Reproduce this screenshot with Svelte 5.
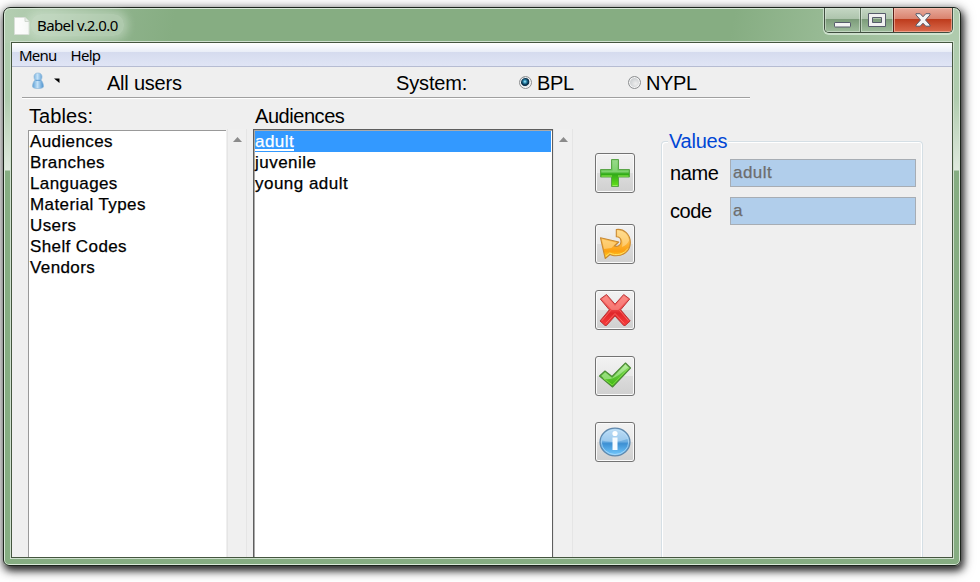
<script>
  const tables = ['Audiences', 'Branches', 'Languages', 'Material Types', 'Users', 'Shelf Codes', 'Vendors'];
  const audiences = ['adult', 'juvenile', 'young adult'];
  const fields = [{ label: 'name', value: 'adult' }, { label: 'code', value: 'a' }];
  let selected = $state('adult');
</script>

<div class="desktop">
<div class="window">
  <header class="titlebar">
    <svg class="doc" width="16" height="18" viewBox="0 0 16 18"><path d="M.5.5H11L15 4.500V17.500H.5Z" fill="#fcfcfc" stroke="#d9dfd8" /><path d="M11 .5V4.500h4" fill="#e9ece9" stroke="#cdd4cc" /></svg>
    <span class="title">Babel v.2.0.0</span>
    <div class="controls">
      <span class="ctl min"><svg width="17" height="6" viewBox="0 0 17 6"><rect x=".5" y=".5" width="16" height="4.500" rx=".6" fill="#f4f4f4" stroke="#565b6b" /></svg></span>
      <span class="ctl max"><svg width="18" height="15" viewBox="0 0 18 15"><path fill-rule="evenodd" d="M.5.5h17v13H.5ZM4.500 4.500v5h9v-5Z" fill="#f1f1f1" stroke="#565b6b" /></svg></span>
      <span class="ctl close"><svg width="16" height="14" viewBox="0 0 16 14"><path d="M1 .7h4.200L8 3.800 10.800.7H15v1.200L10.500 7l4.500 5v1.200h-4.200L8 10.200l-2.800 3H1V12l4.500-5L1 1.900Z" fill="#f4f4f4" stroke="#565b6b" /></svg></span>
    </div>
  </header>
  <main class="client">
    <nav class="menu"><span>Menu</span><span class="help">Help</span></nav>
    <section class="toolbar">
      <svg class="person" width="14" height="18" viewBox="0 0 14 18">
        <defs><linearGradient id="pg" x1="0" x2="1"><stop offset="0" stop-color="#5b9fd5" /><stop offset=".45" stop-color="#c4e2f8" /><stop offset="1" stop-color="#4b91ce" /></linearGradient></defs>
        <path d="M7 1C4.300 1 3 2.700 3 4.800c0 1.500.4 2.300 1.100 3.200C2.400 9.500 1.500 12 1.500 14.500 1.500 16 4 16.500 7 16.500s5.500-.5 5.500-2c0-2.500-.9-5-2.600-6.500C10.600 7.100 11 6.300 11 4.800 11 2.700 9.700 1 7 1Z" fill="url(#pg)" stroke="#8fb7d8" stroke-width=".7" />
        <path d="M4.500 8.300h5" stroke="#5b99d0" />
      </svg>
      <svg class="drop" width="6" height="6" viewBox="0 0 6 6"><path d="M0 .5h5.500V5Z" fill="#000" /></svg>
      <span class="users">All users</span>
      <span class="system">System:</span>
      <label class="bpl"><i class="radio on"></i>BPL</label>
      <label class="nypl"><i class="radio"></i>NYPL</label>
    </section>
    <div class="body">
      <section class="tables">
        <h2>Tables:</h2>
        <div class="pane">
          <div class="list">
            {#each tables as t}<div class="item">{t}</div>{/each}
          </div>
          <div class="scroll"><svg width="9" height="5" viewBox="0 0 9 5"><path d="M4.500 0 9 5H0Z" fill="#8b8b8b" /></svg></div>
        </div>
      </section>
      <section class="records">
        <h2>Audiences</h2>
        <div class="pane">
          <div class="list focus">
            {#each audiences as a}
              <div class="item" class:sel={a === selected} role="option" aria-selected={a === selected} tabindex="-1" onclick={() => (selected = a)} onkeydown={() => {}}><span>{a}</span></div>
            {/each}
          </div>
          <div class="scroll"><svg width="9" height="5" viewBox="0 0 9 5"><path d="M4.500 0 9 5H0Z" fill="#8b8b8b" /></svg></div>
        </div>
      </section>
      <section class="actions">
        <button class="add" aria-label="Add">
          <svg width="36" height="36" viewBox="0 0 36 36">
            <defs><linearGradient id="gp" x1="0" y1="0" x2="0" y2="1"><stop offset="0" stop-color="#86cf78" /><stop offset=".45" stop-color="#5cc24a" /><stop offset=".55" stop-color="#32ab18" /><stop offset="1" stop-color="#65e21b" /></linearGradient></defs>
            <path d="M14.500 4.500h7v10h11v7.500h-11v9.500h-7V22h-11v-7.500h11Z" fill="url(#gp)" stroke="#5aa548" stroke-linejoin="round" />
            <path d="M15.500 15.500V5.500h5v10h11v2H4.500v-2Z" fill="#b9edaa" opacity=".38" />
            <path d="M4.500 21h10.500M21 21h10.500M15.500 30.500h5" stroke="#92ed55" />
          </svg>
        </button>
        <button aria-label="Undo">
          <svg width="36" height="36" viewBox="0 0 36 36">
            <defs><linearGradient id="go" x1="0" y1="0" x2="0" y2="1"><stop offset="0" stop-color="#ffd57a" /><stop offset=".45" stop-color="#fdb63c" /><stop offset=".75" stop-color="#fca010" /><stop offset="1" stop-color="#ffd52a" /></linearGradient></defs>
            <path d="M19.300 3.500C27 2.500 33.500 8.500 33.300 17 33 25.500 26 30.500 17 29.700q-2-.2-4-1.200L8.200 32.500 3.500 11.800 21.800 16l-4.500 4c3 1 6.700-.5 6.700-4.200 0-3.300-2-5-4.700-5Z" fill="url(#go)" stroke="#c88a35" stroke-width="1.100" stroke-linejoin="round" />
            <path d="M20.300 4.600c6-.3 11 4 11.800 10-1.500 3.500-4 5.500-7.300 6.500 2-6.500-.5-10.500-4.500-11.200ZM4.900 13.200l14.500 3.500-5 5.300-7.400 1Z" fill="#ffe6aa" opacity=".5" />
            <path d="m8.900 30.300 3.900-3.300c6 3.200 14.200 1.500 18-4.500" fill="none" stroke="#ffe064" />
          </svg>
        </button>
        <button aria-label="Delete">
          <svg width="36" height="36" viewBox="0 0 36 36">
            <defs><linearGradient id="gr" x1="0" y1="0" x2="0" y2="1"><stop offset="0" stop-color="#f97470" /><stop offset=".45" stop-color="#f04c4c" /><stop offset=".6" stop-color="#df262a" /><stop offset="1" stop-color="#f83c3b" /></linearGradient></defs>
            <path d="M3.300 7 9.500 2.500 18 12.200l8.700-9.700 6 4.500-9 10.800 9.500 11.200-5 4.500h-1.500L18 24l-8.500 9.500H8L3 29l9.300-11.200Z" fill="url(#gr)" stroke="#b8383a" stroke-linejoin="round" />
            <path d="m5 7 4.300-3.200L18 14l8.800-10.200L31 7l-9.700 11h-6.600Z" fill="#ffaca5" opacity=".45" />
            <path d="m4.800 28.800 9-10.500M31.500 28.800l-9-10.500M8.700 31.500l9.300-10 9.300 10" fill="none" stroke="#ff7069" stroke-width=".8" />
          </svg>
        </button>
        <button aria-label="Confirm">
          <svg width="36" height="36" viewBox="0 0 36 36">
            <defs><linearGradient id="gc" x1="0" y1="0" x2="0" y2="1"><stop offset="0" stop-color="#a5e686" /><stop offset=".5" stop-color="#5fc53a" /><stop offset="1" stop-color="#3fb80c" /></linearGradient></defs>
            <path d="m2.500 18 5.500-5 7 5.500L28.500 5l5 5L15.500 29Z" fill="url(#gc)" stroke="#4c8a38" stroke-width="1.100" stroke-linejoin="round" />
            <path d="m4.500 17.800 3.700-3.200 7 5.500L28.300 6.800l2.900 2.600-9 7.400c-6 4-10 5-14.900 4.200Z" fill="#e1ffd3" opacity=".42" />
            <path d="m6.500 20.500 8.900 6.500 16-16.500" fill="none" stroke="#83e545" stroke-width=".9" />
          </svg>
        </button>
        <button aria-label="Information">
          <svg width="36" height="36" viewBox="0 0 36 36">
            <defs>
              <linearGradient id="gi" x1="0" y1="0" x2="0" y2="1"><stop offset="0" stop-color="#a8d1f0" /><stop offset=".48" stop-color="#70b0e2" /><stop offset=".56" stop-color="#3d90d3" /><stop offset="1" stop-color="#75cbff" /></linearGradient>
            </defs>
            <ellipse cx="18" cy="18" rx="15" ry="13.800" fill="url(#gi)" stroke="#6088ac" stroke-width="1.200" />
            <ellipse cx="18" cy="18" rx="13.700" ry="12.500" fill="none" stroke="#b4dcf8" stroke-width=".8" />
            <path d="M5 16.500C7 7.500 13 5.300 19 5.500c6.500.2 11 4.300 12 9.500-6 1-11 5-26 1.500Z" fill="#e2f3ff" opacity=".38" />
            <circle cx="18" cy="9.500" r="2.600" fill="#fff" /><path d="M15.500 13.500h5V26h-5Z" fill="#f6fbff" />
          </svg>
        </button>
      </section>
      <fieldset>
        <legend>Values</legend>
        {#each fields as f}
          <div class="field"><span class="lab">{f.label}</span><span class="input">{f.value}</span></div>
        {/each}
      </fieldset>
    </div>
  </main>
</div>
</div>

<style>
  :global(body) { background: #fff; overflow: hidden; }
  * { box-sizing: border-box; }
  .desktop { width: 980px; height: 582px; padding: 7px 0 0 3px; overflow: hidden; background: #fff; }
  .window {
    width: 958px; height: 559px; padding: 0 8px 8px;
    display: flow-root; border: 1px solid #1c241c; border-radius: 7px 7px 6px 6px;
    background:
      linear-gradient(100deg, #b4ceb2, #a9c6a7 50px, #8fb38c 110px, #86ad82 170px, #86ad82 720px, #9dbe9a 840px, #afcbad 930px) 0 0 / 100% 35px no-repeat,
      linear-gradient(#afccae, #afccae 90px, #bdd4bb 110px, #dfe9de 162px, #86ad82 163px);
    box-shadow: inset 0 0 0 1px #d9e8d8, 2px 4px 7px rgba(0, 0, 0, .65), 1px 3px 12px 1px rgba(0, 0, 0, .6);
    font-family: "Liberation Sans", Arial, sans-serif; color: #000;
  }
  .titlebar { height: 35px; display: flex; align-items: flex-start; margin-left: -1px; }
  .doc { margin: 9px 0 0 3px; }
  .title {
    margin: 6px 0 0 1px; padding: 0 6px; height: 22px; border-radius: 10px;
    font: 15px/23px "Noto Sans", sans-serif; letter-spacing: -.6px;
    background: rgba(225, 237, 224, .4); box-shadow: 0 0 9px 4px rgba(225, 237, 224, .4);
  }
  .controls {
    display: flex; width: 129px; height: 25px; margin: 0 -1px 0 auto; border: 1px solid #3f4d3f; border-top: 0;
    border-radius: 0 0 5px 5px; box-shadow: 0 1px 0 1px rgba(220, 235, 220, .75); overflow: hidden;
  }
  .ctl { display: flex; justify-content: center; box-shadow: inset 0 0 0 1px rgba(230, 240, 230, .5); background: linear-gradient(#c5d7c4, #adc4ac 11px, #7b9b79 11px, #9fbd9d); }
  .min { width: 35px; padding-top: 14px; }
  .max { width: 33px; padding-top: 5px; border-left: 1px solid #536853; }
  .close { flex: 1; padding-top: 5px; border-left: 1px solid #5b1f18; background: linear-gradient(#e8ab9c, #d9826e 11px, #bd3a1b 11px, #d96a4d); box-shadow: inset 0 0 0 1px rgba(255, 205, 190, .55); }
  .client {
    height: 514px; width: 940px; display: flex; flex-direction: column; background: #efefef;
    outline: 1px solid #45563f; box-shadow: 0 0 0 2px #cfe0ce;
  }
  .menu {
    height: 24px; flex: none; padding-left: 7px; border-bottom: 1px solid #b6bcd2;
    background: linear-gradient(#fff, #e9edf7 9px, #d5dbee 9px, #e0e5f5);
    font: 15px/25px "Noto Sans", sans-serif; letter-spacing: -.75px;
  }
  .help { margin-left: 14px; }
  .toolbar {
    height: 31px; width: 728px; flex: none; margin-left: 10px; display: flex; align-items: flex-start;
    border-bottom: 1px solid #a0a0a0; box-shadow: 0 1px #fff; font-size: 20px; line-height: 32px;
  }
  .person { margin: 5px 0 0 9px; }
  .drop { margin: 11px 0 0 9px; }
  .users { margin-left: 47px; width: 289px; letter-spacing: -.22px; }
  .system { width: 123px; letter-spacing: -.15px; }
  label { display: flex; width: 109px; letter-spacing: -.4px; }
  .nypl { letter-spacing: -.4px; }
  .radio {
    width: 13px; height: 13px; margin: 9px 5px 0 0; border: 1px solid #8d8f91; border-radius: 50%;
    background: radial-gradient(circle at 60% 60%, #eee, #c5c9cc 75%); box-shadow: inset 0 0 0 1px #f7f7f7;
  }
  .on { background: radial-gradient(circle at 45% 42%, #bdeeff 0, #3698bd 16%, #0b3753 36%, #10334d 46%, #dfe3e6 54%, #f4f4f4); }
  .body { display: flex; flex: 1; min-height: 0; }
  h2 { height: 31px; margin: 0; font-weight: 400; font-size: 20px; line-height: 36px; letter-spacing: -.45px; }
  .tables { margin-left: 16px; width: 225px; }
  .tables h2 { padding-left: 1px; letter-spacing: .1px; }
  .records { width: 324px; }
  .records h2 { padding-left: 2px; }
  .pane { height: 428px; display: flex; }
  .list { width: 198px; margin-top: 1px; background: #fff; border: solid #999; border-width: 1px 0 0 1px; font-size: 17px; -webkit-text-stroke: .25px; }
  .focus { width: 300px; margin-top: 0; border: 1px solid #5e5e5e; border-bottom: 0; box-shadow: inset 1px 1px #aaa; padding: 1px 1px 0 1px; }
  .item { height: 21px; padding-left: 1px; line-height: 21px; letter-spacing: .4px; white-space: pre; }
  .focus .item { padding-left: 0; letter-spacing: .48px; }
  .sel { background: #3399ff; color: #fff; }
  .sel span { display: inline-block; height: 20px; border-bottom: 2px solid #fff; }
  .scroll { width: 20px; margin-left: 1px; padding: 8px 0 0 5px; border: solid #e5e5e5; border-width: 0 1px; background: #f0f0f0; line-height: 0; }
  .focus + .scroll { margin-left: 0; }
  .actions { width: 40px; margin: 55px 0 0 18px; display: flex; flex-direction: column; gap: 26px; }
  button { width: 40px; height: 40px; flex: none; padding: 0; display: grid; place-items: center; border: 1px solid #737373; border-radius: 3px; background: linear-gradient(#f2f2f2, #e9e9e9 49%, #dcdcdc 50%, #d0d0d0); box-shadow: inset 0 0 0 1px #fafafa; }
  .add { margin-bottom: 5px; }
  fieldset {
    width: 262px; height: 428px; margin: 31px 0 0 26px; padding: 6px 0 0 8px; min-width: 0;
    border: 1px solid #d5dfe5; border-bottom: 0; border-radius: 4px 4px 0 0; box-shadow: inset 1px 1px #fff, inset -1px 0 #fff;
  }
  legend { height: 24px; margin-left: -2px; padding: 0 1px; color: #0046d5; font-size: 20px; line-height: 24px; letter-spacing: -.25px; background: #efefef; }
  .field { display: flex; height: 28px; margin-bottom: 10px; }
  .lab { width: 60px; font-size: 20px; line-height: 29px; letter-spacing: -.4px; }
  .input { width: 186px; padding-left: 2px; background: #b1ceeb; border: 1px solid #a7adb4; color: #6d6d6d; font-size: 17px; line-height: 26px; letter-spacing: .48px; -webkit-text-stroke: .25px; }
</style>
